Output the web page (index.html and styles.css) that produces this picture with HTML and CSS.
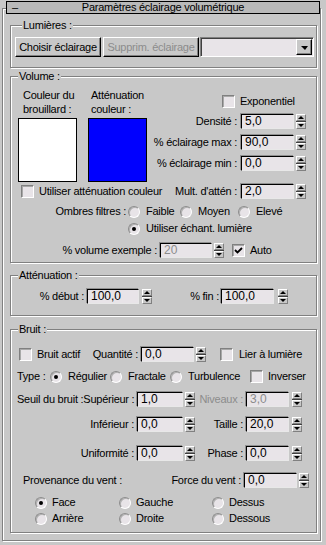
FILE: index.html
```html
<!DOCTYPE html>
<html lang="fr">

<head>
    <meta charset="UTF-8">
    <meta name="viewport" content="width=device-width, initial-scale=1.0">
    <title>Paramètres éclairage volumétrique</title>

    <link rel="stylesheet" href="styles.css">
</head>

<body>

    <div class="rollout">
        <div class="rollout-head">
            <span class="toggle">–</span>
            <span class="rollout-title">Paramètres éclairage volumétrique</span>
        </div>

        <div class="rollout-body">

            <!-- Lumières -->
            <div class="group group-lights">
                <div class="group-title">Lumières :</div>
                <div class="lights-row">
                    <button class="btn btn-pick">Choisir éclairage</button>
                    <button class="btn btn-del" disabled>Supprim. éclairage</button>
                    <div class="combo"><span class="combo-arrow"></span></div>
                </div>
            </div>

            <!-- Volume -->
            <div class="group group-volume">
                <div class="group-title">Volume :</div>
                <div class="vol-top">
                    <div class="swatch-col">
                        <p class="swatch-label">Couleur du<br>brouillard :</p>
                        <div class="swatch swatch-fog"></div>
                    </div>
                    <div class="swatch-col swatch-col-atten">
                        <p class="swatch-label">Atténuation<br>couleur :</p>
                        <div class="swatch swatch-atten"></div>
                    </div>
                    <div class="vol-fields">
                        <div class="exp-row">
                            <span class="check"></span>
                            <span class="check-text">Exponentiel</span>
                        </div>
                        <div class="frow">
                            <span class="lbl">Densité :</span>
                            <span class="field f53">5,0</span>
                            <span class="spin"><i></i><i></i></span>
                        </div>
                        <div class="frow">
                            <span class="lbl">% éclairage max :</span>
                            <span class="field f53">90,0</span>
                            <span class="spin"><i></i><i></i></span>
                        </div>
                        <div class="frow">
                            <span class="lbl">% éclairage min :</span>
                            <span class="field f53">0,0</span>
                            <span class="spin"><i></i><i></i></span>
                        </div>
                    </div>
                </div>

                <div class="mult-row">
                    <span class="check check-atten"></span>
                    <span class="check-text">Utiliser atténuation couleur</span>
                    <div class="mult-field">
                        <span class="lbl">Mult. d'attén :</span>
                        <span class="field f53">2,0</span>
                        <span class="spin"><i></i><i></i></span>
                    </div>
                </div>

                <div class="shadow-row">
                    <span class="shadow-label">Ombres filtres :</span>
                    <span class="opt opt-low"><span class="radio"></span><span class="opt-text">Faible</span></span>
                    <span class="opt opt-mid"><span class="radio"></span><span class="opt-text">Moyen</span></span>
                    <span class="opt"><span class="radio"></span><span class="opt-text">Elevé</span></span>
                </div>
                <div class="sample-row">
                    <span class="opt"><span class="radio on"></span><span class="opt-text">Utiliser échant. lumière</span></span>
                </div>

                <div class="volpct-row">
                    <span class="lbl lbl-volpct">% volume exemple :</span>
                    <span class="field f52 off">20</span>
                    <span class="spin"><i></i><i></i></span>
                    <span class="check checked check-auto">
                        <svg width="9" height="9" viewBox="0 0 9 9"><path d="M1 4 L3.5 6.5 L8 2" fill="none" stroke="#000" stroke-width="1.8"/></svg>
                    </span>
                    <span class="check-text">Auto</span>
                </div>
            </div>

            <!-- Atténuation -->
            <div class="group group-atten">
                <div class="group-title">Atténuation :</div>
                <div class="atten-row">
                    <span class="lbl lbl-start">% début :</span>
                    <span class="field f52">100,0</span>
                    <span class="spin"><i></i><i></i></span>
                    <span class="lbl lbl-end">% fin :</span>
                    <span class="field f53 field-end">100,0</span>
                    <span class="spin spin-end"><i></i><i></i></span>
                </div>
            </div>

            <!-- Bruit -->
            <div class="group group-noise">
                <div class="group-title">Bruit :</div>
                <div class="noise-row">
                    <span class="opt opt-noise-on"><span class="check"></span><span class="check-text">Bruit actif</span></span>
                    <span class="lbl lbl-qty">Quantité :</span>
                    <span class="field f53">0,0</span>
                    <span class="spin"><i></i><i></i></span>
                    <span class="check check-link"></span>
                    <span class="check-text check-text-link">Lier à lumière</span>
                </div>

                <div class="type-row">
                    <span class="type-label">Type :</span>
                    <span class="opt opt-type"><span class="radio on"></span><span class="opt-text">Régulier</span></span>
                    <span class="opt opt-type"><span class="radio"></span><span class="opt-text">Fractale</span></span>
                    <span class="opt opt-type opt-turb"><span class="radio"></span><span class="opt-text">Turbulence</span></span>
                    <span class="check"></span>
                    <span class="check-text">Inverser</span>
                </div>

                <div class="thr-row thr-first">
                    <span class="thr-label"><span>Seuil du bruit :</span><span>Supérieur :</span></span>
                    <span class="field f46">1,0</span>
                    <span class="spin"><i></i><i></i></span>
                    <span class="lbl lbl-right off-text">Niveaux :</span>
                    <span class="field f43 off">3,0</span>
                    <span class="spin spin-right"><i></i><i></i></span>
                </div>
                <div class="thr-row thr-low">
                    <span class="lbl lbl-left">Inférieur :</span>
                    <span class="field f46">0,0</span>
                    <span class="spin"><i></i><i></i></span>
                    <span class="lbl lbl-right">Taille :</span>
                    <span class="field f43">20,0</span>
                    <span class="spin spin-right"><i></i><i></i></span>
                </div>
                <div class="thr-row thr-uni">
                    <span class="lbl lbl-left">Uniformité :</span>
                    <span class="field f46">0,0</span>
                    <span class="spin"><i></i><i></i></span>
                    <span class="lbl lbl-right">Phase :</span>
                    <span class="field f43">0,0</span>
                    <span class="spin spin-right"><i></i><i></i></span>
                </div>

                <div class="wind-row">
                    <span class="wind-label">Provenance du vent :</span>
                    <span class="lbl lbl-force">Force du vent :</span>
                    <span class="field f53">0,0</span>
                    <span class="spin"><i></i><i></i></span>
                </div>
                <div class="dir-row dir-first">
                    <span class="opt dir-a"><span class="radio on"></span><span class="dir-text">Face</span></span>
                    <span class="opt dir-b"><span class="radio"></span><span class="dir-text">Gauche</span></span>
                    <span class="opt"><span class="radio"></span><span class="dir-text">Dessus</span></span>
                </div>
                <div class="dir-row">
                    <span class="opt dir-a"><span class="radio"></span><span class="dir-text">Arrière</span></span>
                    <span class="opt dir-b"><span class="radio"></span><span class="dir-text">Droite</span></span>
                    <span class="opt"><span class="radio"></span><span class="dir-text">Dessous</span></span>
                </div>
            </div>

        </div>
    </div>

</body>

</html>
```

FILE: styles.css
```css
* {
    margin: 0;
    padding: 0;
    box-sizing: border-box;
}

body {
    background-color: #c8c8c8;
    font: 11px/13px "Liberation Sans", Arial, sans-serif;
    letter-spacing: -0.25px;
    color: #000;
    width: 326px;
    height: 545px;
    overflow: hidden;
}

/* cadre du rollout */
.rollout {
    padding-top: 1px;
}

.rollout-head {
    position: relative;
    z-index: 1;
    display: flex;
    align-items: center;
    width: 314px;
    height: 13px;
    margin: 0 0 -6px 6px;
    border: 1px solid #000;
    background-color: #b9b9b9;
    line-height: 11px;
}

.toggle {
    width: 14px;
    padding-left: 5px;
}

.rollout-title {
    flex: 1;
    text-align: center;
    padding-right: 14px;
}

.rollout-body {
    width: 319px;
    margin-left: 2px;
    padding: 0 0 7px 7px;
    border: 1px solid #808080;
    box-shadow: inset 1px 1px 0 #fff, 1px 1px 0 #fff;
}

/* groupes */
.group {
    width: 307px;
    border: 1px solid #808080;
    box-shadow: inset 1px 1px 0 #fff, 1px 1px 0 #fff;
}

.group-title {
    width: fit-content;
    margin: -7px 0 0 7px;
    padding: 0 1px;
    background-color: #c8c8c8;
}

.group-lights {
    margin-top: 16px;
    padding: 0 0 10px 4px;
}

.group-volume {
    margin-top: 8px;
    padding-bottom: 4px;
}

.group-atten {
    margin-top: 12px;
    padding-bottom: 11px;
}

.group-noise {
    margin-top: 13px;
    padding-bottom: 7px;
}

/* contrôles */
.lights-row {
    display: flex;
    margin-top: 5px;
    height: 20px;
}

.btn {
    flex: none;
    height: 20px;
    font: inherit;
    letter-spacing: inherit;
    color: #000;
    background-color: #c8c8c8;
    border: 1px solid;
    border-color: #fff #000 #000 #fff;
    box-shadow: inset -1px -1px 0 #808080;
    text-align: center;
}

.btn-pick {
    width: 86px;
}

.btn-del {
    width: 96px;
    margin-left: 2px;
    color: #8c8c8c;
}

.combo {
    display: flex;
    flex: none;
    justify-content: flex-end;
    align-items: center;
    width: 114px;
    height: 20px;
    margin-left: 1px;
    padding-right: 1px;
    background-color: #e8e4e8;
    border: 1px solid;
    border-color: #808080 #fff #fff #808080;
    box-shadow: inset 1px 1px 0 #404040;
}

.combo-arrow {
    display: flex;
    justify-content: center;
    align-items: center;
    width: 16px;
    height: 16px;
    background-color: #c8c8c8;
    border: 1px solid;
    border-color: #fff #000 #000 #fff;
    box-shadow: inset -1px -1px 0 #808080;
}

.combo-arrow::after {
    content: "";
    border-left: 4px solid transparent;
    border-right: 3px solid transparent;
    border-top: 4px solid #000;
    margin-top: 1px;
}

.field {
    display: block;
    flex: none;
    height: 15px;
    padding-left: 3px;
    background-color: #e8e4e8;
    border: 1px solid;
    border-color: #000 #e8e8e8 #e8e8e8 #000;
    box-shadow: -1px -1px 0 #909090;
    font-size: 12px;
    line-height: 13px;
    letter-spacing: 0;
}

.field.off {
    color: #8c8c8c;
}

.f53 { width: 53px; }
.f52 { width: 52px; }
.f46 { width: 46px; }
.f43 { width: 43px; }

.spin {
    display: flex;
    flex: none;
    flex-direction: column;
    justify-content: space-between;
    width: 10px;
    height: 15px;
    margin-left: 2px;
    background-color: #404040;
}

.spin i {
    display: flex;
    justify-content: center;
    align-items: center;
    height: 7px;
    background-color: #c8c8c8;
    border: 1px solid;
    border-color: #fff #808080 #808080 #fff;
}

.spin i:first-child::after {
    content: "";
    border-left: 3px solid transparent;
    border-right: 3px solid transparent;
    border-bottom: 3px solid #000;
}

.spin i:last-child::after {
    content: "";
    border-left: 3px solid transparent;
    border-right: 3px solid transparent;
    border-top: 3px solid #000;
}

.check {
    display: flex;
    justify-content: center;
    align-items: center;
    flex: none;
    width: 13px;
    height: 13px;
    background-color: #e8e4e8;
    border: 1px solid;
    border-color: #808080 #fff #fff #808080;
    box-shadow: inset 1px 1px 0 #a8a8a8;
}

.check-text {
    margin-left: 5px;
    white-space: nowrap;
}

.radio {
    position: relative;
    flex: none;
    width: 12px;
    height: 12px;
    border-radius: 50%;
    background-color: #e8e4e8;
    border: 1px solid;
    border-color: #8c8c8c #fff #fff #8c8c8c;
    box-shadow: inset 1px 1px 0 #b0b0b0;
}

.radio.on::after {
    content: "";
    position: absolute;
    left: 3px;
    top: 3px;
    width: 4px;
    height: 4px;
    border-radius: 50%;
    background-color: #000;
}

.opt {
    display: flex;
    flex: none;
    align-items: center;
    white-space: nowrap;
}

.opt-text {
    margin-left: 6px;
}

.lbl {
    flex: none;
    white-space: nowrap;
    text-align: right;
}

.off-text {
    color: #8c8c8c;
}

/* volume */
.vol-top {
    display: flex;
    align-items: flex-start;
}

.swatch-col {
    width: 59px;
    margin-left: 7px;
}

.swatch-col-atten {
    margin-left: 11px;
}

.swatch-label {
    height: 28px;
    margin-top: 5px;
    padding-left: 5px;
    line-height: 14px;
    white-space: nowrap;
}

.swatch-col-atten .swatch-label {
    padding-left: 3px;
}

.swatch {
    height: 64px;
    margin-top: 2px;
    border: 1px solid #000;
}

.swatch-fog {
    background-color: #fff;
}

.swatch-atten {
    background-color: #0000ff;
}

.vol-fields {
    width: 157px;
    margin: 0 10px 0 auto;
}

.exp-row {
    display: flex;
    align-items: center;
    height: 13px;
    margin-top: 12px;
    padding-left: 73px;
}

.frow {
    display: flex;
    justify-content: flex-end;
    align-items: center;
    height: 15px;
    margin-top: 6px;
}

.frow .lbl,
.mult-field .lbl {
    margin-right: 4px;
}

.mult-row {
    display: flex;
    align-items: center;
    height: 15px;
    margin-top: 2px;
}

.check-atten {
    margin-left: 10px;
}

.mult-field {
    display: flex;
    align-items: center;
    margin: 0 10px 0 auto;
}

.shadow-row {
    display: flex;
    align-items: center;
    height: 13px;
    margin-top: 6px;
}

.shadow-label {
    width: 115px;
    text-align: right;
}

.opt-low {
    width: 52px;
    margin-left: 2px;
}

.opt-mid {
    width: 58px;
}

.sample-row {
    display: flex;
    align-items: center;
    height: 13px;
    margin-top: 4px;
    padding-left: 117px;
}

.volpct-row {
    display: flex;
    align-items: center;
    height: 15px;
    margin-top: 8px;
}

.lbl-volpct {
    width: 146px;
    margin-right: 3px;
}

.check-auto {
    margin-left: 8px;
}

/* atténuation */
.atten-row {
    display: flex;
    align-items: center;
    height: 15px;
    margin-top: 7px;
}

.lbl-start {
    width: 73px;
    margin-right: 3px;
}

.atten-row .spin {
    margin-left: 3px;
}

.lbl-end {
    width: 67px;
    margin-right: 2px;
}

.atten-row .spin-end {
    margin-left: 4px;
}

/* bruit */
.noise-row {
    display: flex;
    align-items: center;
    height: 15px;
    margin-top: 11px;
}

.opt-noise-on {
    width: 69px;
    margin-left: 8px;
}

.lbl-qty {
    width: 50px;
    margin-right: 3px;
}

.check-link {
    margin-left: 14px;
}

.check-text-link {
    margin-left: 6px;
}

.type-row {
    display: flex;
    align-items: center;
    height: 13px;
    margin-top: 8px;
}

.type-label {
    width: 33px;
    margin-left: 6px;
}

.opt-type {
    width: 60px;
}

.opt-type.opt-turb {
    width: 80px;
}

.thr-row {
    display: flex;
    align-items: center;
    height: 15px;
}

.thr-first {
    margin-top: 9px;
}

.thr-low {
    margin-top: 10px;
}

.thr-uni {
    margin-top: 14px;
}

.thr-label {
    display: flex;
    justify-content: space-between;
    width: 117px;
    margin: 0 3px 0 6px;
    white-space: nowrap;
}

.lbl-left {
    width: 123px;
    margin-right: 3px;
}

.lbl-right {
    width: 48px;
    margin-right: 3px;
}

.thr-row .spin-right {
    margin-left: 3px;
}

.wind-row {
    display: flex;
    align-items: center;
    height: 15px;
    margin-top: 12px;
}

.wind-label {
    width: 157px;
    padding-left: 12px;
}

.lbl-force {
    width: 73px;
    margin-right: 3px;
}

.dir-row {
    display: flex;
    align-items: center;
    height: 13px;
    margin-top: 3px;
}

.dir-row.dir-first {
    margin-top: 8px;
}

.dir-a {
    width: 84px;
    margin-left: 24px;
}

.dir-b {
    width: 93px;
}

.dir-text {
    margin-left: 5px;
}
```
